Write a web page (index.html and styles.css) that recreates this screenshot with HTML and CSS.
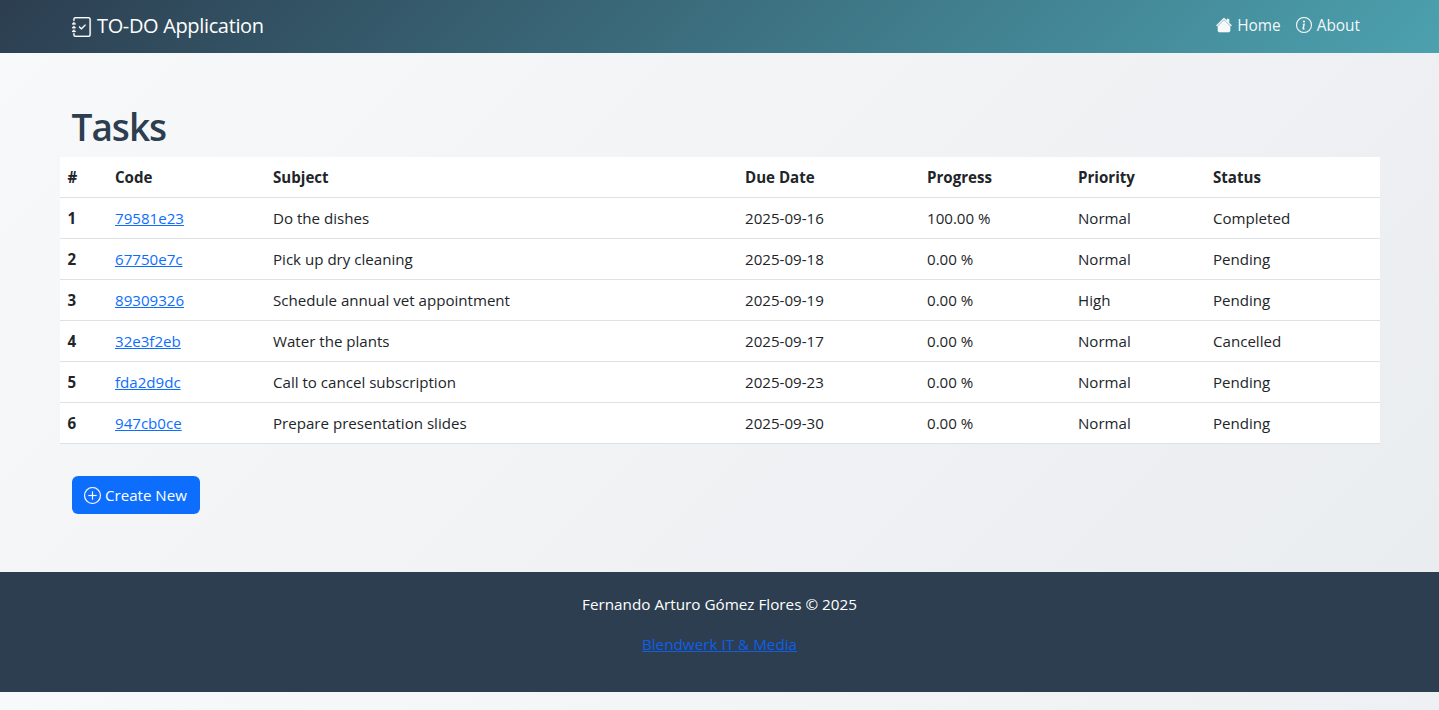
FILE: index.html
```html
<!DOCTYPE html>
<html lang="en">
<head>
<meta charset="utf-8">
<title>TO-DO Application</title>
<link rel="stylesheet" href="styles.css">
</head>
<body>
<nav class="navbar">
  <a class="brand" href="#">
    <svg class="icon-brand" viewBox="0 0 16 16" fill="currentColor"><path fill-rule="evenodd" d="M10.854 6.146a.5.5 0 0 1 0 .708l-3 3a.5.5 0 0 1-.708 0l-1.5-1.5a.5.5 0 1 1 .708-.708L7.5 8.793l2.646-2.647a.5.5 0 0 1 .708 0"/><path d="M3 0h10a2 2 0 0 1 2 2v12a2 2 0 0 1-2 2H3a2 2 0 0 1-2-2v-1h1v1a1 1 0 0 0 1 1h10a1 1 0 0 0 1-1V2a1 1 0 0 0-1-1H3a1 1 0 0 0-1 1v1H1V2a2 2 0 0 1 2-2"/><path d="M1 5v-.5a.5.5 0 0 1 1 0V5h.5a.5.5 0 0 1 0 1h-2a.5.5 0 0 1 0-1zm0 3v-.5a.5.5 0 0 1 1 0V8h.5a.5.5 0 0 1 0 1h-2a.5.5 0 0 1 0-1zm0 3v-.5a.5.5 0 0 1 1 0v.5h.5a.5.5 0 0 1 0 1h-2a.5.5 0 0 1 0-1z"/></svg>
    <span class="brand-text">TO-DO Application</span>
  </a>
  <div class="nav-links">
    <a class="nav-link" href="#"><svg class="icon icon-solid" viewBox="0 0 16 16" fill="currentColor"><path d="M8.707 1.5a1 1 0 0 0-1.414 0L.646 8.146a.5.5 0 0 0 .708.708L8 2.207l6.646 6.647a.5.5 0 0 0 .708-.708L13 5.793V2.5a.5.5 0 0 0-.5-.5h-1a.5.5 0 0 0-.5.5v1.293z"/><path d="m8 3.293 6 6V13.5a1.5 1.5 0 0 1-1.5 1.5h-9A1.5 1.5 0 0 1 2 13.5V9.293z"/></svg><span class="nav-text">Home</span></a>
    <a class="nav-link" href="#"><svg class="icon" viewBox="0 0 16 16" fill="currentColor"><path d="M8 15A7 7 0 1 1 8 1a7 7 0 0 1 0 14m0 1A8 8 0 1 0 8 0a8 8 0 0 0 0 16"/><path d="m8.93 6.588-2.29.287-.082.38.45.083c.294.07.352.176.288.469l-.738 3.468c-.194.897.105 1.319.808 1.319.545 0 1.178-.252 1.465-.598l.088-.416c-.2.176-.492.246-.686.246-.275 0-.375-.193-.304-.533zM9 4.5a1 1 0 1 1-2 0 1 1 0 0 1 2 0"/></svg><span class="nav-text">About</span></a>
  </div>
</nav>
<main class="container">
  <h1 class="title">Tasks</h1>
  <table class="tasks">
    <colgroup>
      <col class="c-num"><col class="c-code"><col class="c-subject"><col class="c-due"><col class="c-progress"><col class="c-priority"><col class="c-status">
    </colgroup>
    <thead>
      <tr><th>#</th><th>Code</th><th>Subject</th><th>Due Date</th><th>Progress</th><th>Priority</th><th>Status</th></tr>
    </thead>
    <tbody>
      <tr><th>1</th><td><a href="#">79581e23</a></td><td>Do the dishes</td><td>2025-09-16</td><td>100.00 %</td><td>Normal</td><td>Completed</td></tr>
      <tr><th>2</th><td><a href="#">67750e7c</a></td><td>Pick up dry cleaning</td><td>2025-09-18</td><td>0.00 %</td><td>Normal</td><td>Pending</td></tr>
      <tr><th>3</th><td><a href="#">89309326</a></td><td>Schedule annual vet appointment</td><td>2025-09-19</td><td>0.00 %</td><td>High</td><td>Pending</td></tr>
      <tr><th>4</th><td><a href="#">32e3f2eb</a></td><td>Water the plants</td><td>2025-09-17</td><td>0.00 %</td><td>Normal</td><td>Cancelled</td></tr>
      <tr><th>5</th><td><a href="#">fda2d9dc</a></td><td>Call to cancel subscription</td><td>2025-09-23</td><td>0.00 %</td><td>Normal</td><td>Pending</td></tr>
      <tr><th>6</th><td><a href="#">947cb0ce</a></td><td>Prepare presentation slides</td><td>2025-09-30</td><td>0.00 %</td><td>Normal</td><td>Pending</td></tr>
    </tbody>
  </table>
  <a class="btn" href="#"><svg class="icon-btn" viewBox="0 0 16 16" fill="currentColor"><path d="M8 15A7 7 0 1 1 8 1a7 7 0 0 1 0 14m0 1A8 8 0 1 0 8 0a8 8 0 0 0 0 16"/><path d="M8 4a.5.5 0 0 1 .5.5v3h3a.5.5 0 0 1 0 1h-3v3a.5.5 0 0 1-1 0v-3h-3a.5.5 0 0 1 0-1h3v-3A.5.5 0 0 1 8 4"/></svg>Create New</a>
</main>
<footer class="footer">
  <p>Fernando Arturo Gómez Flores © 2025</p>
  <p><a href="#">Blendwerk IT &amp; Media</a></p>
</footer>
</body>
</html>
```
FILE: styles.css
```css
* { box-sizing: border-box; }
body {
  margin: 0;
  font-family: "Open Sans", "Noto Sans", sans-serif;
  font-size: 15.1px;
  line-height: 24px;
  color: #212529;
  background: linear-gradient(135deg, #f8f9fa 0%, #e9ecef 100%);
}
.navbar {
  height: 53px;
  padding: 0 72px;
  display: flex;
  align-items: center;
  justify-content: space-between;
  background: linear-gradient(135deg, #2c3e50 0%, #4ca1af 100%);
}
.brand {
  display: flex;
  align-items: center;
  gap: 5px;
  color: #fff;
  text-decoration: none;
  font-size: 20px;
  letter-spacing: -0.35px;
}
.brand-text { position: relative; top: -1px; }
.icon-brand { width: 20px; height: 20px; stroke: currentColor; stroke-width: 0.2; }
.nav-links { display: flex; gap: 15px; padding-right: 7px; }
.nav-link {
  display: flex;
  align-items: center;
  gap: 5px;
  font-size: 15.4px;
  color: rgba(255, 255, 255, .95);
  text-decoration: none;
}
.nav-text { position: relative; top: -1px; }
.icon { width: 16px; height: 16px; flex: none; position: relative; top: -2px; stroke: currentColor; stroke-width: 0.15; }
.icon-solid { stroke-width: 0.6; }
.icon-btn { width: 17px; height: 17px; flex: none; stroke: currentColor; stroke-width: 0.15; }
.container { width: 1320px; margin: 0 auto; padding: 48px 12px 58px; }
.title {
  margin: 0 0 8px;
  font-size: 37px;
  line-height: 48px;
  font-weight: 600;
  letter-spacing: -1px;
  color: #2c3e50;
  position: relative;
  top: 2px;
}
.tasks {
  width: 1320px;
  margin: 0 -12px 32px;
  table-layout: fixed;
  border-collapse: separate;
  border-spacing: 0;
  background: #fff;
}
.c-num { width: 47.5px; }
.c-code { width: 158px; }
.c-subject { width: 472px; }
.c-due { width: 182px; }
.c-progress { width: 151px; }
.c-priority { width: 135px; }
.c-status { width: 174.5px; }
.tasks th, .tasks td {
  height: 41px;
  padding: 8px;
  text-align: left;
  border-bottom: 1px solid #dee2e6;
}
.tasks th { font-weight: 700; }
.tasks a { color: #0d6efd; }
.btn {
  display: inline-flex;
  align-items: center;
  gap: 4.5px;
  height: 38px;
  padding: 0 13px 0 12px;
  border-radius: 6px;
  background: #0d6efd;
  color: #fff;
  text-decoration: none;
  vertical-align: top;
}
.footer {
  height: 120px;
  padding: 20px 0;
  text-align: center;
  font-size: 15.25px;
  background: #2c3e50;
  color: #fff;
}
.footer p { margin: 0 0 16px; }
.footer a { color: #0f5fe6; }
```
